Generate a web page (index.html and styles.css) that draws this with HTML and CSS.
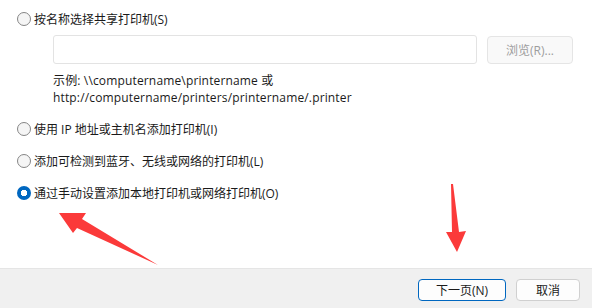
FILE: index.html
```html
<!DOCTYPE html>
<html lang="zh-CN">
<head>
    <meta charset="UTF-8">
    <title>添加打印机</title>
    <link rel="stylesheet" href="styles.css">
</head>
<body>

<div class="dialog">
    <div class="options">
        <label class="option">
            <span class="radio"></span>
            <span>按名称选择共享打印机(S)</span>
        </label>

        <div class="share">
            <div class="share-row">
                <div class="textbox"></div>
                <button class="btn-browse" disabled>浏览(R)...</button>
            </div>
            <p class="example">示例: \\computername\printername 或<br>http://computername/printers/printername/.printer</p>
        </div>

        <label class="option option-ip">
            <span class="radio"></span>
            <span>使用 IP 地址或主机名添加打印机(I)</span>
        </label>
        <label class="option">
            <span class="radio"></span>
            <span>添加可检测到蓝牙、无线或网络的打印机(L)</span>
        </label>
        <label class="option">
            <span class="radio checked"></span>
            <span>通过手动设置添加本地打印机或网络打印机(O)</span>
        </label>
    </div>

    <div class="footer">
        <button class="btn btn-primary">下一页(N)</button>
        <button class="btn">取消</button>
    </div>

    <!-- 标注箭头 -->
    <svg class="marks" width="592" height="308" viewBox="0 0 592 308">
        <polygon points="59,213 86,213 82,219 158,265 77,228 73,233" fill="#fb3a3a"/>
        <polygon points="451,184 453,184 459,232 466,231 457,252 446,232 452,232" fill="#fb3a3a"/>
    </svg>
</div>

</body>
</html>
```

FILE: styles.css
```css
body {
    margin: 0;
    background-color: #ffffff;
    font-family: "Open Sans", "Noto Sans CJK SC", sans-serif;
    font-size: 12px;
    color: #1a1a1a;
}
.dialog {
    position: relative;
    width: 592px;
    height: 308px;
    display: flex;
    flex-direction: column;
    overflow: hidden;
}
.options {
    flex: 1;
    padding: 9px 0 0 17px;
}
.option {
    display: flex;
    align-items: center;
    gap: 3px;
    height: 20px;
    margin-bottom: 12px;
}
.option-ip {
    margin-top: 13px;
}
.radio {
    width: 12px;
    height: 12px;
    border: 1px solid #858585;
    border-radius: 50%;
    background-color: #f5f5f5;
    flex-shrink: 0;
}
.radio.checked {
    width: 14px;
    height: 14px;
    border: none;
    background: radial-gradient(circle, #ffffff 0 3px, #0067c0 3.5px);
}
.share {
    margin: -6px 0 0 36px;
}
.share-row {
    display: flex;
    gap: 10px;
    align-items: flex-start;
}
.textbox {
    width: 422px;
    height: 27px;
    border: 1px solid #e3e3e3;
    border-radius: 3px;
    background-color: #ffffff;
}
.btn-browse {
    width: 86px;
    height: 28px;
    margin-top: 1px;
    border: 1px solid #e5e5e5;
    border-radius: 4px;
    background-color: #f9f9f9;
    color: #9d9d9d;
    font-family: inherit;
    font-size: 12px;
}
.example {
    margin: 8px 0 0;
    line-height: 17px;
    letter-spacing: 0.15px;
}
.footer {
    height: 40px;
    border-top: 1px solid #e5e5e5;
    background-color: #f0f0f0;
    display: flex;
    justify-content: flex-end;
    align-items: flex-start;
    gap: 10px;
    padding: 10px 12px 0 0;
    box-sizing: border-box;
}
.btn {
    width: 64px;
    height: 22px;
    border: 1px solid #d0d0d0;
    border-radius: 4px;
    background-color: #fdfdfd;
    color: #1a1a1a;
    font-family: inherit;
    font-size: 12px;
    padding: 0;
}
.btn-primary {
    width: 88px;
    border-color: #0067c0;
}
.marks {
    position: absolute;
    top: 0;
    left: 0;
    pointer-events: none;
}
```
